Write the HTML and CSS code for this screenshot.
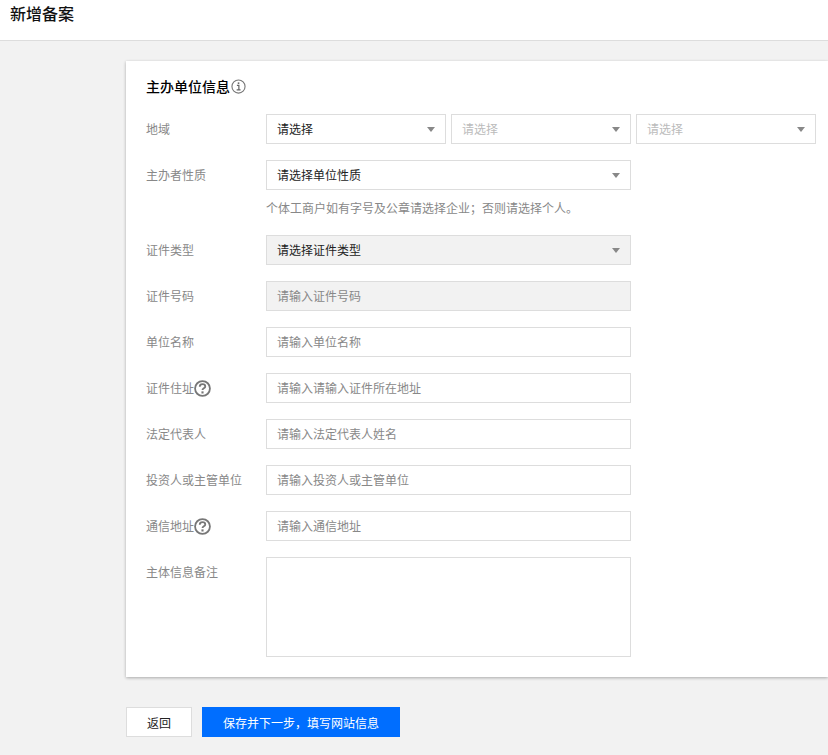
FILE: index.html
```html
<!DOCTYPE html>
<html lang="zh-CN">
<head>
<meta charset="utf-8">
<title>新增备案</title>
<link rel="stylesheet" href="styles.css">
</head>
<body>
<header class="page-head"><h1>新增备案</h1></header>
<main class="content">
  <section class="card">
    <h2 class="card-title">主办单位信息<svg class="icon-info" viewBox="0 0 16 16" width="15" height="15"><circle cx="8" cy="8" r="7" fill="none" stroke="#777" stroke-width="1.2"/><rect x="7.2" y="3.6" width="1.7" height="1.7" fill="#666"/><path d="M6.3 6.9h2.1v4.4M6 11.6h4.2" fill="none" stroke="#666" stroke-width="1.3"/></svg></h2>
    <div class="form">
      <div class="row">
        <div class="label">地域</div>
        <div class="selects">
          <div class="control select"><span>请选择</span><i class="caret"></i></div>
          <div class="control select muted"><span>请选择</span><i class="caret"></i></div>
          <div class="control select muted"><span>请选择</span><i class="caret"></i></div>
        </div>
      </div>
      <div class="row with-help">
        <div class="label">主办者性质</div>
        <div>
          <div class="control select wide"><span>请选择单位性质</span><i class="caret"></i></div>
          <p class="help">个体工商户如有字号及公章请选择企业；否则请选择个人。</p>
        </div>
      </div>
      <div class="row">
        <div class="label">证件类型</div>
        <div class="control select wide disabled"><span>请选择证件类型</span><i class="caret"></i></div>
      </div>
      <div class="row">
        <div class="label">证件号码</div>
        <div class="control wide disabled placeholder">请输入证件号码</div>
      </div>
      <div class="row">
        <div class="label">单位名称</div>
        <div class="control wide placeholder">请输入单位名称</div>
      </div>
      <div class="row">
        <div class="label">证件住址<svg class="icon-help" viewBox="0 0 16 16" width="17" height="17"><circle cx="8" cy="8" r="7" fill="none" stroke="#777" stroke-width="1.7"/><path d="M5.4 6.3c0-1.5 1.1-2.4 2.6-2.4s2.6.8 2.6 2.1c0 1.9-2.6 1.8-2.6 3.5" fill="none" stroke="#777" stroke-width="1.7"/><rect x="7" y="10.7" width="2" height="2" fill="#777"/></svg></div>
        <div class="control wide placeholder">请输入请输入证件所在地址</div>
      </div>
      <div class="row">
        <div class="label">法定代表人</div>
        <div class="control wide placeholder">请输入法定代表人姓名</div>
      </div>
      <div class="row">
        <div class="label">投资人或主管单位</div>
        <div class="control wide placeholder">请输入投资人或主管单位</div>
      </div>
      <div class="row">
        <div class="label">通信地址<svg class="icon-help" viewBox="0 0 16 16" width="17" height="17"><circle cx="8" cy="8" r="7" fill="none" stroke="#777" stroke-width="1.7"/><path d="M5.4 6.3c0-1.5 1.1-2.4 2.6-2.4s2.6.8 2.6 2.1c0 1.9-2.6 1.8-2.6 3.5" fill="none" stroke="#777" stroke-width="1.7"/><rect x="7" y="10.7" width="2" height="2" fill="#777"/></svg></div>
        <div class="control wide placeholder">请输入通信地址</div>
      </div>
      <div class="row">
        <div class="label">主体信息备注</div>
        <div class="control wide textarea"></div>
      </div>
    </div>
  </section>
  <div class="actions">
    <button class="btn" type="button">返回</button>
    <button class="btn primary" type="button">保存并下一步，填写网站信息</button>
  </div>
</main>
</body>
</html>
```
FILE: styles.css
```css
* { box-sizing: border-box; }
html, body { margin: 0; height: 755px; overflow: hidden; }
body {
  background: #f2f2f2;
  font-family: "Noto Sans CJK SC", "Liberation Sans", sans-serif;
  font-size: 12px;
  color: #222;
}
.page-head {
  height: 41px;
  background: #fff;
  border-bottom: 1px solid #ddd;
  padding-left: 10px;
}
.page-head h1 {
  margin: 0;
  font-size: 16px;
  line-height: 26px;
  font-weight: 500;
  color: #111;
}
.content { padding: 20px 0 0 126px; }
.card {
  background: #fff;
  padding: 15px 0 20px 20px;
  box-shadow: 0 1px 3px rgba(0, 0, 0, .3);
}
.card-title {
  display: flex;
  align-items: center;
  gap: 1px;
  margin: 0 0 18px;
  font-size: 14px;
  line-height: 20px;
  font-weight: 500;
  color: #000;
}
.form { display: flex; flex-direction: column; gap: 16px; }
.row { display: flex; align-items: flex-start; }
.label {
  display: flex;
  align-items: center;
  width: 120px;
  flex: none;
  height: 28px;
  color: #888;
}
.selects { display: flex; gap: 5px; }
.control {
  height: 30px;
  border: 1px solid #ddd;
  background: #fff;
  padding: 0 10px;
  line-height: 30px;
  display: flex;
  align-items: center;
  width: 180px;
  color: #222;
}
.select { justify-content: space-between; }
.control.wide { width: 365px; }
.control.muted { color: #bbb; }
.control.placeholder { color: #888; }
.disabled { background: #f2f2f2; }
.textarea { height: 100px; }
.caret {
  width: 0;
  height: 0;
  border-left: 4px solid transparent;
  border-right: 4px solid transparent;
  border-top: 5px solid #888;
}
.help {
  margin: 9px 0 0;
  line-height: 18px;
  color: #888;
  height: 20px;
}
.icon-help { margin-top: 2px; }
.actions {
  display: flex;
  gap: 10px;
  margin-top: 30px;
}
.btn {
  height: 30px;
  width: 66px;
  border: 1px solid #ddd;
  background: #fff;
  color: #222;
  font: inherit;
  padding: 0;
}
.btn.primary {
  width: 198px;
  border: 0;
  background: #006eff;
  color: #fff;
}
```
